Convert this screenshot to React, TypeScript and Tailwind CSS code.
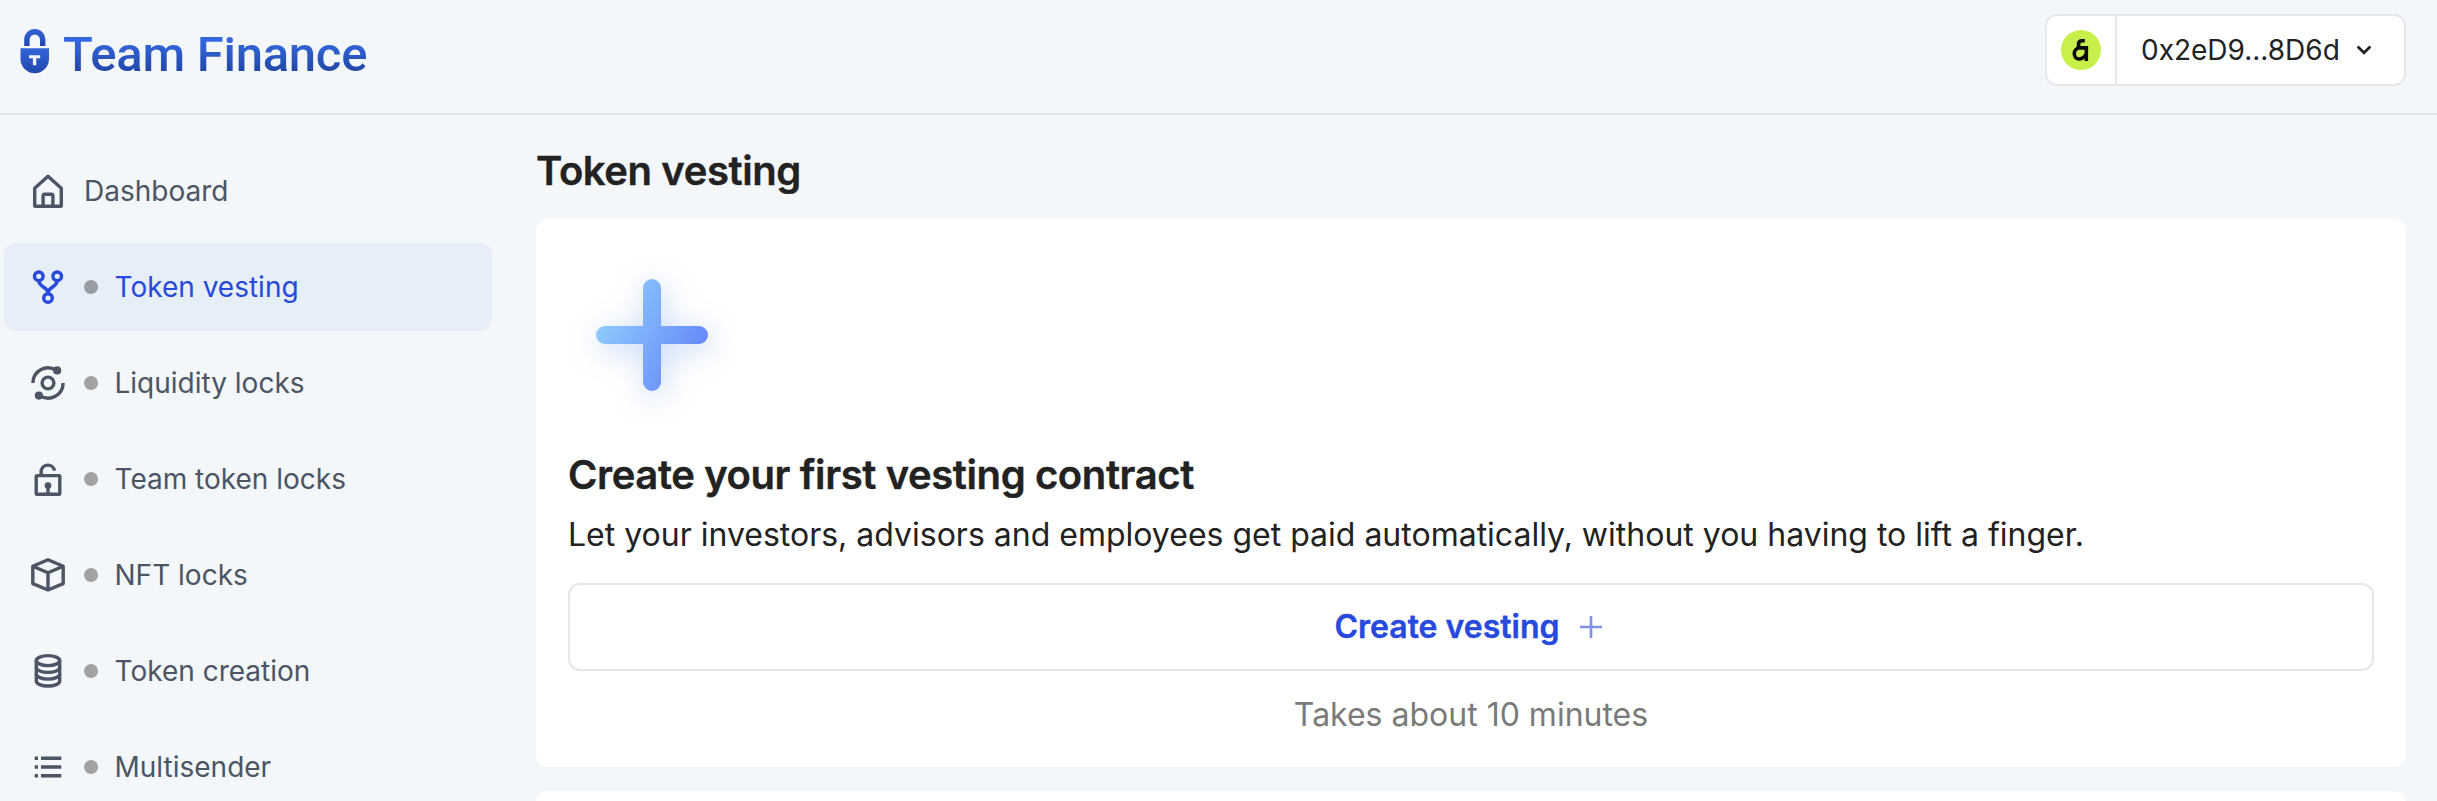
import React from "react";

type IconProps = { children: React.ReactNode };

function Icon({ children }: IconProps) {
  return (
    <svg
      width="40"
      height="40"
      viewBox="0 0 40 40"
      fill="none"
      stroke="currentColor"
      strokeWidth="3.4"
      strokeLinejoin="round"
      className="shrink-0"
    >
      {children}
    </svg>
  );
}

const HomeIcon = () => (
  <Icon>
    <path d="M20 5.2 33.3 17.2V34.2a1.1 1.1 0 0 1-1.1 1.1H7.8a1.1 1.1 0 0 1-1.1-1.1V17.2Z" />
    <path d="M15.1 35V24.4a1.1 1.1 0 0 1 1.1-1.1h7.6a1.1 1.1 0 0 1 1.1 1.1V35" />
  </Icon>
);

const ForkIcon = () => (
  <Icon>
    <circle cx="10.8" cy="9.3" r="4.3" />
    <circle cx="29.2" cy="9.3" r="4.3" />
    <circle cx="20" cy="31" r="4.3" />
    <path d="M10.8 13.5C10.8 20.5 20 19.5 20 26.5M29.2 13.5C29.2 20.5 20 19.5 20 26.5" />
  </Icon>
);

const LiquidityIcon = () => (
  <Icon>
    <circle cx="20" cy="20" r="5.9" />
    <path d="M4.9 20A15.1 15.1 0 0 1 28 7.2M35.1 20A15.1 15.1 0 0 1 12 32.8" />
    <circle cx="29.1" cy="7.4" r="4.1" fill="currentColor" stroke="none" />
    <circle cx="10.9" cy="32.6" r="4.1" fill="currentColor" stroke="none" />
  </Icon>
);

const UnlockIcon = () => (
  <Icon>
    <rect x="8.2" y="16.6" width="23.6" height="18.6" rx="0.8" />
    <path d="M13.2 16.5V11.4A6.8 6.8 0 0 1 26.5 11.6" />
    <circle cx="20" cy="26.6" r="3.3" fill="currentColor" stroke="none" />
    <path d="M20 27V35" />
  </Icon>
);

const CubeIcon = () => (
  <Icon>
    <path d="M20 4.8 35.2 11.3V28.6L20 35 4.8 28.6V11.3Z" />
    <path d="M4.8 11.3 20 17.8 35.2 11.3M20 17.8V35" />
  </Icon>
);

const DatabaseIcon = () => (
  <Icon>
    <ellipse cx="20" cy="9.6" rx="11.7" ry="5" />
    <path d="M8.3 9.6V30C8.3 32.9 13.5 35 20 35S31.7 32.9 31.7 30V9.6" />
    <path d="M8.3 16.4C8.3 19.2 13.5 21.4 20 21.4S31.7 19.2 31.7 16.4" />
    <path d="M8.3 23.1C8.3 25.9 13.5 28.1 20 28.1S31.7 25.9 31.7 23.1" />
  </Icon>
);

const ListIcon = () => (
  <Icon>
    <path d="M6.7 11.3H10M13 11.3H33.3M6.7 20H10M13 20H33.3M6.7 28.7H10M13 28.7H33.3" />
  </Icon>
);

const items = [
  { label: "Dashboard", icon: HomeIcon, dot: false, active: false },
  { label: "Token vesting", icon: ForkIcon, dot: true, active: true },
  { label: "Liquidity locks", icon: LiquidityIcon, dot: true, active: false },
  { label: "Team token locks", icon: UnlockIcon, dot: true, active: false },
  { label: "NFT locks", icon: CubeIcon, dot: true, active: false },
  { label: "Token creation", icon: DatabaseIcon, dot: true, active: false },
  { label: "Multisender", icon: ListIcon, dot: true, active: false },
];

function Logo() {
  return (
    <div className="flex items-center">
      <svg width="30" height="46" viewBox="0 0 30 46" fill="none" className="mt-[-7px] shrink-0">
        <defs>
          <linearGradient id="shackle" x1="0" y1="1" x2="0" y2="18" gradientUnits="userSpaceOnUse">
            <stop stopColor="#3264d8" />
            <stop offset="1" stopColor="#2148ac" />
          </linearGradient>
          <linearGradient id="body" x1="0" y1="20" x2="0" y2="45" gradientUnits="userSpaceOnUse">
            <stop stopColor="#3264d8" />
            <stop offset="1" stopColor="#2148ac" />
          </linearGradient>
        </defs>
        <path d="M4.2 18V11.6a10.6 10.6 0 0 1 21.2 0V18H20V11.8a5.2 5.2 0 0 0-10.4 0V18Z" fill="url(#shackle)" />
        <path d="M.5 20.2H29V31a14.25 14.25 0 0 1-28.5 0Z" fill="url(#body)" />
        <path d="M9 27.2H20.2V30.3H16.3V37.3H12.9V30.3H9Z" fill="#f3f7fb" />
      </svg>
      <span className="ml-[13px] bg-linear-to-b from-[#3569e2] from-25% to-[#1f449f] to-85% bg-clip-text pt-px font-[Roboto] text-[49px] leading-[60px] font-medium tracking-[-0.27px] whitespace-nowrap text-transparent">
        Team Finance
      </span>
    </div>
  );
}

function Wallet() {
  return (
    <button className="flex h-[72px] w-[361px] items-stretch rounded-xl border-2 border-[#e5e7eb] bg-white">
      <span className="flex w-[70px] items-center justify-center border-r-2 border-[#e5e7eb]">
        <svg width="40" height="40" viewBox="0 0 40 40" fill="none">
          <circle cx="20" cy="20" r="20" fill="#c8f04b" />
          <g stroke="#0b0b0b" strokeWidth="3.6">
            <path d="M25.3 16.4V31" />
            <path d="M27.1 17.9H18.5A5.4 5.4 0 0 0 13.3 23.5C13.3 27 15.3 29 18.2 29S22.5 27.8 25 24.5" />
            <path d="M17.5 17V14.5C17.5 12 19 10.8 21 10.8H23.8" />
          </g>
        </svg>
      </span>
      <span className="flex flex-1 items-center pl-[24px] text-[28px] text-[#222]">
        <span className="whitespace-nowrap">0x2eD9...8D6d</span>
        <svg width="16" height="12" viewBox="0 0 16 12" fill="none" stroke="#222" strokeWidth="2.8" className="ml-[16px]">
          <path d="M1.6 2.5 8 8.8 14.4 2.5" />
        </svg>
      </span>
    </button>
  );
}

function PlusArt() {
  return (
    <svg width="168" height="168" viewBox="0 0 168 168" fill="none" className="block">
      <defs>
        <linearGradient id="plus" x1="28" y1="56" x2="140" y2="112" gradientUnits="userSpaceOnUse">
          <stop stopColor="#93d0fd" />
          <stop offset="1" stopColor="#6283f8" />
        </linearGradient>
        <filter id="glow" x="-40" y="-40" width="248" height="248" filterUnits="userSpaceOnUse">
          <feGaussianBlur stdDeviation="15" />
        </filter>
      </defs>
      <path
        d="M87 42V138M39 90H135"
        stroke="#6f9fe8"
        strokeOpacity="0.38"
        strokeWidth="20"
        strokeLinecap="round"
        filter="url(#glow)"
      />
      <path
        d="M75 37a9 9 0 0 1 18 0V75H131a9 9 0 0 1 0 18H93V131a9 9 0 0 1-18 0V93H37a9 9 0 0 1 0-18H75Z"
        fill="url(#plus)"
      />
    </svg>
  );
}

export default function App() {
  return (
    <div className="flex h-[801px] w-full flex-col overflow-hidden bg-[#f3f7fa] font-[Inter,sans-serif] text-[#222]">
      <header className="flex h-[115px] shrink-0 items-start justify-between border-b-2 border-[#e5e7eb] pr-[31px] pl-[20px]">
        <div className="pt-[24px]">
          <Logo />
        </div>
        <div className="pt-[14px]">
          <Wallet />
        </div>
      </header>
      <div className="flex min-h-0 flex-1">
        <nav className="flex w-[536px] shrink-0 flex-col gap-2 pt-8 pr-[44px] pl-1">
          {items.map(({ label, icon: Glyph, dot, active }) => (
            <a
              key={label}
              className={
                active
                  ? "flex h-[88px] shrink-0 items-center rounded-xl bg-[#e6eef8] pl-6 text-[#2749dc]"
                  : "flex h-[88px] shrink-0 items-center rounded-xl pl-6 text-[#4b5563]"
              }
            >
              <Glyph />
              {dot && <span className="mr-[0.5px] ml-4 size-[14px] shrink-0 rounded-full bg-[#222]/40" />}
              <span className="ml-4 text-[28px] whitespace-nowrap">{label}</span>
            </a>
          ))}
        </nav>
        <main className="flex w-[1870px] flex-col">
          <h1 className="mt-[32px] text-[40px] leading-[48px] font-semibold tracking-[-0.4px] [-webkit-text-stroke:0.4px_#222]">
            Token vesting
          </h1>
          <section className="mt-[24px] h-[548px] shrink-0 rounded-xl bg-white p-8">
            <PlusArt />
            <h2 className="mt-[32px] text-[40px] leading-[48px] font-semibold tracking-[-0.4px] [-webkit-text-stroke:0.4px_#222]">
              Create your first vesting contract
            </h2>
            <p className="mt-[12px] text-[32px] leading-[48px]">
              Let your investors, advisors and employees get paid automatically, without you having to lift a finger.
            </p>
            <button className="mt-[24px] flex h-[88px] w-full items-center justify-center rounded-xl border-2 border-[#e5e7eb] text-[32px] font-semibold text-[#2749dc] [-webkit-text-stroke:0.4px_#2749dc]">
              <span>Create vesting</span>
              <svg width="22" height="22" viewBox="0 0 22 22" stroke="#2749dc" strokeOpacity="0.6" strokeWidth="2.6" className="mr-[6px] ml-5">
                <path d="M11 0V22M0 11H22" />
              </svg>
            </button>
            <p className="mt-[20px] text-center text-[32px] leading-[48px] text-[#7a7a7a]">Takes about 10 minutes</p>
          </section>
          <section className="mt-6 h-40 shrink-0 rounded-xl bg-white" />
        </main>
      </div>
    </div>
  );
}
